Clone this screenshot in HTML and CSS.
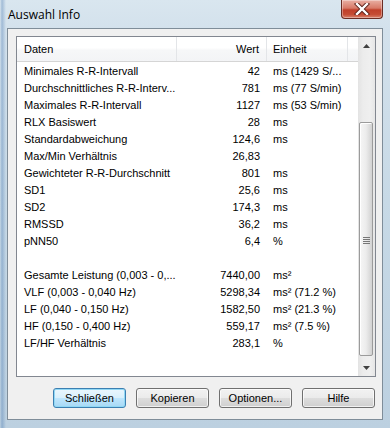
FILE: index.html
```html
<!DOCTYPE html>
<html>
<head>
<meta charset="utf-8">
<link rel="stylesheet" href="styles.css">
</head>
<body>
<div class="window">
  <div class="titlebar">
    <span class="title">Auswahl Info</span>
    <div class="close">
      <svg width="16" height="12" viewBox="0 0 16 12">
        <path d="M3 1 L13 11 M13 1 L3 11" stroke="#5a2018" stroke-width="4.2" stroke-linecap="square" fill="none"/>
        <path d="M3 1 L13 11 M13 1 L3 11" stroke="#ffffff" stroke-width="2.4" stroke-linecap="square" fill="none"/>
      </svg>
    </div>
  </div>
  <div class="client">
    <div class="listbox">
      <div class="listmain">
        <div class="header">
          <div class="hc c1">Daten</div>
          <div class="hc c2">Wert</div>
          <div class="hc c3">Einheit</div>
          <div class="hc c4"></div>
        </div>
        <div class="rows">
          <div class="row"><span class="c1">Minimales R-R-Intervall</span><span class="c2">42</span><span class="c3">ms (1429 S/...</span></div>
          <div class="row"><span class="c1">Durchschnittliches R-R-Interv...</span><span class="c2">781</span><span class="c3">ms (77 S/min)</span></div>
          <div class="row"><span class="c1">Maximales R-R-Intervall</span><span class="c2">1127</span><span class="c3">ms (53 S/min)</span></div>
          <div class="row"><span class="c1">RLX Basiswert</span><span class="c2">28</span><span class="c3">ms</span></div>
          <div class="row"><span class="c1">Standardabweichung</span><span class="c2">124,6</span><span class="c3">ms</span></div>
          <div class="row"><span class="c1">Max/Min Verhältnis</span><span class="c2">26,83</span><span class="c3"></span></div>
          <div class="row"><span class="c1">Gewichteter R-R-Durchschnitt</span><span class="c2">801</span><span class="c3">ms</span></div>
          <div class="row"><span class="c1">SD1</span><span class="c2">25,6</span><span class="c3">ms</span></div>
          <div class="row"><span class="c1">SD2</span><span class="c2">174,3</span><span class="c3">ms</span></div>
          <div class="row"><span class="c1">RMSSD</span><span class="c2">36,2</span><span class="c3">ms</span></div>
          <div class="row"><span class="c1">pNN50</span><span class="c2">6,4</span><span class="c3">%</span></div>
          <div class="row"><span class="c1"></span><span class="c2"></span><span class="c3"></span></div>
          <div class="row"><span class="c1">Gesamte Leistung (0,003 - 0,...</span><span class="c2">7440,00</span><span class="c3">ms²</span></div>
          <div class="row"><span class="c1">VLF (0,003 - 0,040 Hz)</span><span class="c2">5298,34</span><span class="c3">ms² (71.2 %)</span></div>
          <div class="row"><span class="c1">LF (0,040 - 0,150 Hz)</span><span class="c2">1582,50</span><span class="c3">ms² (21.3 %)</span></div>
          <div class="row"><span class="c1">HF (0,150 - 0,400 Hz)</span><span class="c2">559,17</span><span class="c3">ms² (7.5 %)</span></div>
          <div class="row"><span class="c1">LF/HF Verhältnis</span><span class="c2">283,1</span><span class="c3">%</span></div>
        </div>
      </div>
      <div class="scrollbar">
        <div class="sbtn"><svg width="7" height="4" viewBox="0 0 7 4"><path d="M3.5 0 L7 4 L0 4 Z" fill="#404040"/></svg></div>
        <div class="track">
          <div class="thumb"><span class="grip"></span></div>
        </div>
        <div class="sbtn"><svg width="7" height="4" viewBox="0 0 7 4"><path d="M0 0 L7 0 L3.5 4 Z" fill="#404040"/></svg></div>
      </div>
    </div>
    <div class="buttons">
      <div class="btn default">Schließen</div>
      <div class="btn">Kopieren</div>
      <div class="btn">Optionen...</div>
      <div class="btn">Hilfe</div>
    </div>
  </div>
</div>
</body>
</html>
```

FILE: styles.css
```css
* { box-sizing: border-box; }
html, body { margin: 0; padding: 0; }
body {
  width: 390px;
  height: 428px;
  overflow: hidden;
  font-family: "Liberation Sans", Arial, sans-serif;
  font-size: 11px;
  color: #000;
}
.window {
  width: 390px;
  height: 428px;
  display: flex;
  flex-direction: column;
  background:
    linear-gradient(90deg, rgba(60,110,170,0.0) 0px, rgba(60,110,170,0.35) 2px, rgba(60,110,170,0.0) 6px),
    linear-gradient(180deg, #d9e6ef 0px, #d3e1ec 30px, #c7d9e6 200px, #bcd0e0 428px);
}
.titlebar {
  height: 28px;
  flex: none;
  display: flex;
  justify-content: space-between;
  align-items: flex-start;
}
.title {
  font-family: "Open Sans", "Noto Sans", sans-serif;
  font-size: 12px;
  line-height: 16px;
  margin: 7px 0 0 8px;
  color: #000;
}
.close {
  width: 42px;
  height: 19px;
  margin-right: 7px;
  border: 1px solid #6b2d24;
  border-top: none;
  border-radius: 0 0 4px 4px;
  background: linear-gradient(180deg, #e9b0a4 0%, #d87a68 45%, #c0402a 55%, #c54c34 80%, #d9826c 100%);
  box-shadow: inset 0 0 0 1px rgba(255,255,255,0.35);
  display: flex;
  align-items: center;
  justify-content: center;
}
.client {
  flex: 1;
  margin: 0 7px 8px 7px;
  border: 1px solid #7f8d99;
  background: #f0f0f0;
  padding: 7px 6px 0 8px;
  display: flex;
  flex-direction: column;
}
.listbox {
  height: 341px;
  width: 360px;
  border: 1px solid #828790;
  background: #fff;
  display: flex;
}
.listmain {
  flex: 1;
  overflow: hidden;
}
.header {
  height: 25px;
  display: flex;
  background: linear-gradient(180deg, #ffffff 0%, #ffffff 45%, #f6f7f8 55%, #f3f4f6 100%);
  border-bottom: 1px solid #d5d5d5;
}
.hc {
  height: 24px;
  line-height: 17px;
  padding-top: 4px;
  border-right: 1px solid #e3e5e8;
  white-space: nowrap;
}
.c1 { width: 160px; padding-left: 7px; text-align: left; }
.c2 { width: 90px; padding-right: 7px; text-align: right; }
.c3 { width: 81px; padding-left: 6px; text-align: left; }
.c4 { flex: 1; border-right: none; }
.rows { padding-top: 1px; }
.row {
  display: flex;
  height: 17px;
  line-height: 17px;
  white-space: nowrap;
}
.row span { display: block; overflow: hidden; }
.row .c3 { width: auto; flex: 1; }
.scrollbar {
  width: 17px;
  flex: none;
  display: flex;
  flex-direction: column;
  background: linear-gradient(90deg, #e3e3e3 0%, #ececec 30%, #efefef 70%, #e6e6e6 100%);
}
.sbtn {
  height: 17px;
  flex: none;
  display: flex;
  align-items: center;
  justify-content: center;
}
.track {
  flex: 1;
  padding: 68px 2px 2px 1px;
}
.thumb {
  height: 234px;
  border: 1px solid #9b9b9b;
  border-radius: 2px;
  background: linear-gradient(90deg, #f6f6f6 0%, #ececec 50%, #dcdcdc 80%, #d2d2d2 100%);
  box-shadow: inset 1px 1px 0 #ffffff;
  display: flex;
  align-items: center;
  justify-content: center;
}
.grip {
  width: 7px;
  height: 7px;
  background: repeating-linear-gradient(180deg, #777 0px, #777 1px, transparent 1px, transparent 2px);
  margin-top: 2px;
}
.buttons {
  display: flex;
  justify-content: flex-end;
  gap: 10px;
  margin-top: 11px;
  padding-right: 1px;
}
.btn {
  width: 73px;
  height: 20px;
  border: 1px solid #707070;
  border-radius: 3px;
  background: linear-gradient(180deg, #f2f2f2 0%, #ebebeb 48%, #dddddd 52%, #cfcfcf 100%);
  box-shadow: inset 0 0 0 1px rgba(255,255,255,0.7);
  text-align: center;
  line-height: 18px;
  font-size: 11px;
}
.btn.default {
  border-color: #3c7fb1;
  background: linear-gradient(180deg, #eaf6fd 0%, #d9f0fc 48%, #bee6fd 52%, #a7d9f5 100%);
  box-shadow: inset 0 0 0 1px #90d8f5;
}
```
